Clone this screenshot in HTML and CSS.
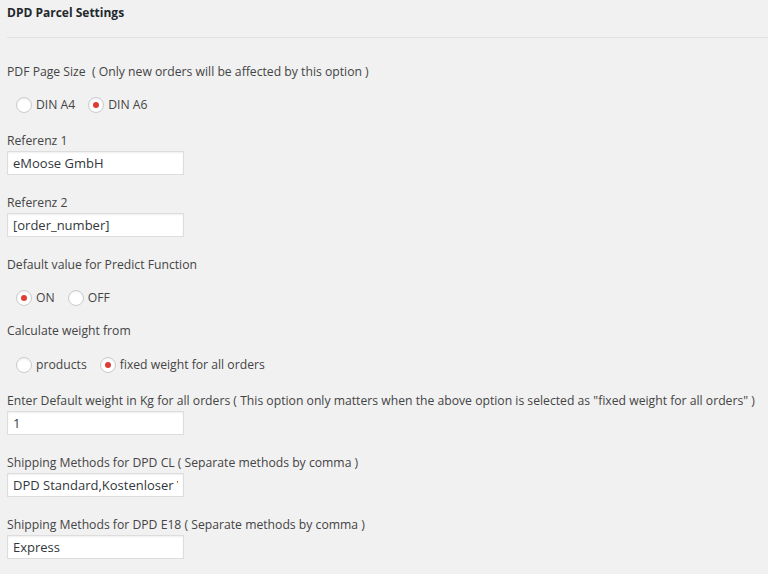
FILE: index.html
```html
<!DOCTYPE html>
<html lang="en">
<head>
    <meta charset="UTF-8">
    <meta name="viewport" content="width=device-width, initial-scale=1.0">
    <title>DPD Parcel Settings</title>
    <link rel="stylesheet" href="styles.css">
</head>
<body>
    <h3 class="title">DPD Parcel Settings</h3>
    <hr class="divider" />

    <form id="dpdSettings">
        <div class="group">
            <div class="label">PDF Page Size&nbsp; ( Only new orders will be affected by this option )</div>
            <div class="radios">
                <label><span class="radio"></span>DIN A4</label>
                <label><span class="radio checked"></span>DIN A6</label>
            </div>
        </div>

        <div class="field">
            <div class="label">Referenz 1</div>
            <input type="text" class="text" value="eMoose GmbH" />
        </div>

        <div class="field">
            <div class="label">Referenz 2</div>
            <input type="text" class="text" value="[order_number]" />
        </div>

        <div class="group tight">
            <div class="label">Default value for Predict Function</div>
            <div class="radios">
                <label><span class="radio checked"></span>ON</label>
                <label><span class="radio"></span>OFF</label>
            </div>
        </div>

        <div class="group">
            <div class="label">Calculate weight from</div>
            <div class="radios wide">
                <label><span class="radio"></span>products</label>
                <label><span class="radio checked"></span>fixed weight for all orders</label>
            </div>
        </div>

        <div class="field">
            <div class="label">Enter Default weight in Kg for all orders ( This option only matters when the above option is selected as "fixed weight for all orders" )</div>
            <input type="text" class="text" value="1" />
        </div>

        <div class="field">
            <div class="label">Shipping Methods for DPD CL ( Separate methods by comma )</div>
            <input type="text" class="text" value="DPD Standard,Kostenloser Versand" />
        </div>

        <div class="field">
            <div class="label">Shipping Methods for DPD E18 ( Separate methods by comma )</div>
            <input type="text" class="text" value="Express" />
        </div>
    </form>
</body>
</html>
```

FILE: styles.css
```css
body {
    font-family: "Open Sans", sans-serif;
    font-size: 12.2px;
    line-height: 18px;
    background-color: #f1f1f1;
    color: #444;
    margin: 0;
    padding: 0 0 0 7px;
}

.title {
    font-size: 12px;
    font-weight: 700;
    line-height: 18px;
    color: #23282d;
    margin: 0;
    padding-top: 4px;
}

.divider {
    margin: 15px 0 0 0;
    border: none;
    border-top: 1px solid #e1e1e1;
}

#dpdSettings {
    padding-top: 25px;
}

.label {
    line-height: 18px;
    white-space: nowrap;
}

/* radio groups */
.group {
    margin-bottom: 18px;
}

.group.tight {
    margin-bottom: 15px;
}

.radios {
    display: flex;
    gap: 13px;
    margin-top: 15px;
    padding-left: 9px;
}

.radios.wide {
    margin-top: 16px;
}

.radios label {
    display: flex;
    align-items: center;
    height: 18px;
}

.radio {
    display: inline-block;
    box-sizing: border-box;
    width: 16px;
    height: 16px;
    margin-right: 4px;
    border: 1px solid #c8cbcd;
    border-radius: 50%;
    background-color: #fff;
    box-shadow: inset 0 1px 2px rgba(0, 0, 0, 0.07);
    position: relative;
}

.radio.checked::before {
    content: "";
    position: absolute;
    left: 4px;
    top: 4px;
    width: 6px;
    height: 6px;
    border-radius: 50%;
    background-color: #dd3d36;
}

/* text fields */
.field {
    margin-bottom: 19px;
}

.text {
    display: block;
    box-sizing: border-box;
    width: 177px;
    height: 24px;
    margin: 1px 0 0 0;
    padding: 2px 5px;
    font-family: "Open Sans", sans-serif;
    font-size: 13px;
    color: #32373c;
    background-color: #fff;
    border: 1px solid #ddd;
    box-shadow: inset 0 1px 2px rgba(0, 0, 0, 0.07);
    outline: none;
}
```
